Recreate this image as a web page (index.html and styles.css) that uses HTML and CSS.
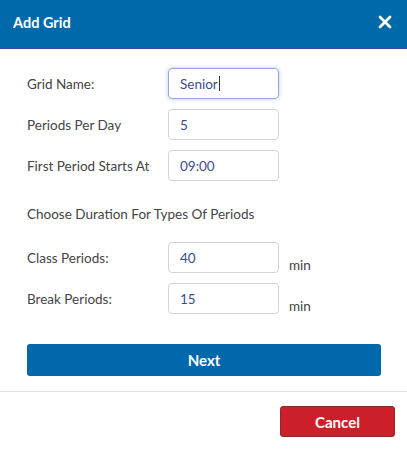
FILE: index.html
```html
<!DOCTYPE html>
<html>
<head>
<meta charset="utf-8">
<link rel="stylesheet" href="styles.css">
</head>
<body>
<div class="modal">
  <div class="header">
    <span class="title">Add Grid</span>
    <svg class="close" width="14" height="14" viewBox="0 0 14 14"><path d="M2 2 L12 12 M12 2 L2 12" stroke="#fff" stroke-width="2.8" stroke-linecap="round"/></svg>
  </div>
  <div class="body">
    <div class="row">
      <label class="label">Grid Name:</label>
      <div class="input focus">Senior<span class="caret"></span></div>
    </div>
    <div class="row">
      <label class="label">Periods Per Day</label>
      <div class="input">5</div>
    </div>
    <div class="row">
      <label class="label">First Period Starts At</label>
      <div class="input">09:00</div>
    </div>
    <div class="section">Choose Duration For Types Of Periods</div>
    <div class="row">
      <label class="label">Class Periods:</label>
      <div class="input">40</div>
      <span class="unit">min</span>
    </div>
    <div class="row">
      <label class="label">Break Periods:</label>
      <div class="input">15</div>
      <span class="unit">min</span>
    </div>
    <button class="next">Next</button>
  </div>
  <div class="footer">
    <button class="cancel">Cancel</button>
  </div>
</div>
</body>
</html>
```
FILE: styles.css
```css
html, body {
  margin: 0;
  padding: 0;
  background: #fff;
  font-family: Lato, "Open Sans", sans-serif;
}
.modal {
  width: 407px;
}
.header {
  box-sizing: border-box;
  height: 49px;
  background: #0069aa;
  border-bottom: 1px solid #3a4a9a;
  display: flex;
  align-items: center;
  justify-content: space-between;
  padding: 0 15px 4px 13px;
}
.title {
  color: #fff;
  font-weight: bold;
  font-size: 14.5px;
}
.close {
  display: block;
}
.body {
  padding: 19px 26px 0 27px;
}
.row {
  display: flex;
  align-items: center;
  margin-bottom: 10px;
}
.label {
  width: 141px;
  font-size: 13.5px;
  color: #444;
}
.input {
  width: 111px;
  height: 31px;
  box-sizing: border-box;
  border: 1px solid #d4d4d4;
  border-radius: 4px;
  padding: 0 11px;
  display: flex;
  align-items: center;
  font-size: 13.5px;
  color: #3b4d8a;
}
.input.focus {
  border-color: #9aa4dc;
  box-shadow: 0 0 4px rgba(110, 130, 220, 0.45);
}
.caret {
  display: inline-block;
  width: 1px;
  height: 15px;
  background: #333;
  margin-left: 1px;
}
.unit {
  font-size: 13.5px;
  color: #444;
  margin-left: 10px;
  align-self: flex-end;
  margin-bottom: 0;
}
.section {
  font-size: 13.5px;
  color: #444;
  margin: 25px 0 20px;
}
.next {
  display: block;
  width: 354px;
  height: 32px;
  margin-top: 30px;
  border: none;
  border-radius: 3px;
  background: #0068aa;
  color: #fff;
  font-family: Lato, sans-serif;
  font-weight: bold;
  font-size: 15px;
}
.footer {
  margin-top: 15px;
  border-top: 1px solid #e2e2e2;
  display: flex;
  justify-content: flex-end;
  padding: 14px 12px 0 0;
}
.cancel {
  width: 115px;
  height: 31px;
  border: 1px solid #8a2a2a;
  border-radius: 3px;
  background: #cc1f2a;
  color: #fff;
  font-family: Lato, sans-serif;
  font-weight: bold;
  font-size: 15px;
}
```
